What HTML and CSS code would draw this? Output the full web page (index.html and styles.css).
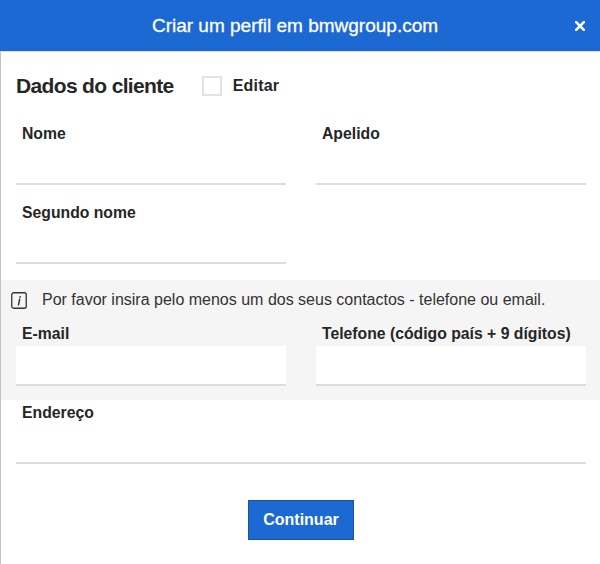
FILE: index.html
```html
<!DOCTYPE html>
<html lang="pt">
<head>
<meta charset="utf-8">
<title>Criar um perfil em bmwgroup.com</title>
<link rel="stylesheet" href="styles.css">
</head>
<body>
<div class="modal">
  <header class="header">
    <span></span>
    <h1 class="header-title">Criar um perfil em bmwgroup.com</h1>
    <button class="close" aria-label="Fechar">
      <svg width="10" height="10" viewBox="0 0 10 10"><path d="M1.2 1.2L8.8 8.8M8.8 1.2L1.2 8.8" stroke="#fff" stroke-width="2.6" stroke-linecap="square"/></svg>
    </button>
  </header>
  <div class="body">
    <section class="section">
      <div class="title-row">
        <h2 class="title">Dados do cliente</h2>
        <label class="edit"><span class="checkbox"></span><span class="edit-text">Editar</span></label>
      </div>
      <div class="grid">
        <div class="field"><div class="label">Nome</div><div class="input"></div></div>
        <div class="field"><div class="label">Apelido</div><div class="input"></div></div>
        <div class="field"><div class="label">Segundo nome</div><div class="input"></div></div>
      </div>
    </section>
    <section class="band">
      <div class="info">
        <svg class="info-icon" width="16" height="17" viewBox="0 0 16 17"><rect x="0.75" y="0.75" width="14.5" height="15.5" rx="2" fill="none" stroke="#333" stroke-width="1.3"/><path d="M8.7 7.2L7.5 12.8" stroke="#333" stroke-width="1.5" stroke-linecap="round"/><circle cx="9.1" cy="4.9" r="0.9" fill="#333"/></svg>
        <span>Por favor insira pelo menos um dos seus contactos - telefone ou email.</span>
      </div>
      <div class="grid band-grid">
        <div class="field"><div class="label">E-mail</div><div class="box"></div></div>
        <div class="field"><div class="label">Telefone (código país + 9 dígitos)</div><div class="box"></div></div>
      </div>
    </section>
    <section class="section address">
      <div class="field"><div class="label">Endereço</div><div class="input"></div></div>
      <div class="actions"><button class="btn">Continuar</button></div>
    </section>
  </div>
</div>
</body>
</html>
```
FILE: styles.css
```css
* { box-sizing: border-box; }
html, body { margin: 0; padding: 0; background: #fff; }
body {
  font-family: "Liberation Sans", Arial, sans-serif;
  color: #262626;
  width: 600px;
  height: 564px;
  overflow: hidden;
}
.modal { width: 600px; height: 564px; display: flex; flex-direction: column; }
.header {
  height: 52px;
  background: #1c69d4;
  display: grid;
  grid-template-columns: 1fr auto 1fr;
  align-items: center;
  border-bottom: 1px solid #dcdcdc;
}
.header-title {
  margin: 0 10px 0 0;
  font-size: 19px;
  font-weight: normal;
  color: #fff;
  line-height: 22px;
  -webkit-text-stroke: 0.3px #fff;
}
.close {
  justify-self: end;
  margin-right: 15px;
  padding: 0;
  border: 0;
  background: none;
  width: 10px;
  height: 10px;
  display: flex;
}
.body {
  flex: 1;
  border-left: 1px solid #c2c2c2;
}
.section { padding: 0 14px 0 15px; }
.title-row {
  display: flex;
  align-items: center;
  height: 28px;
  margin-top: 20px;
}
.title {
  margin: 0;
  font-size: 21px;
  font-weight: bold;
  letter-spacing: -0.65px;
  line-height: 28px;
}
.edit { display: flex; align-items: center; margin-left: 28px; }
.checkbox {
  width: 20px;
  height: 20px;
  border: 2px solid #e2e2e2;
  background: #fff;
}
.edit-text { margin-left: 11px; font-size: 16px; font-weight: bold; letter-spacing: 0.2px; }
.grid {
  display: grid;
  grid-template-columns: 270px 270px;
  column-gap: 30px;
  row-gap: 19px;
  margin-top: 25px;
}
.label {
  padding-left: 6px;
  font-size: 15.75px;
  font-weight: bold;
  line-height: 18px;
}
.input {
  height: 42px;
  border-bottom: 2px solid #dcdcdc;
}
.band {
  margin-top: 16px;
  height: 120px;
  background: #f5f5f5;
  padding: 11px 14px 0 15px;
}
.info {
  display: flex;
  align-items: center;
  margin-left: -5px;
  font-size: 16px;
  line-height: 18px;
  color: #333;
}
.info-icon { margin-right: 15px; flex: none; }
.band-grid { margin-top: 16px; }
.box {
  margin-top: 3px;
  height: 40px;
  background: #fff;
  border-bottom: 2px solid #dcdcdc;
}
.address { padding-top: 4px; }
.actions { display: flex; justify-content: center; margin-top: 36px; }
.btn {
  width: 106px;
  height: 40px;
  background: #1c69d4;
  border: 1px solid #1653a8;
  color: #fff;
  font-family: "Liberation Sans", Arial, sans-serif;
  font-size: 16px;
  font-weight: bold;
  padding: 0;
}
```
